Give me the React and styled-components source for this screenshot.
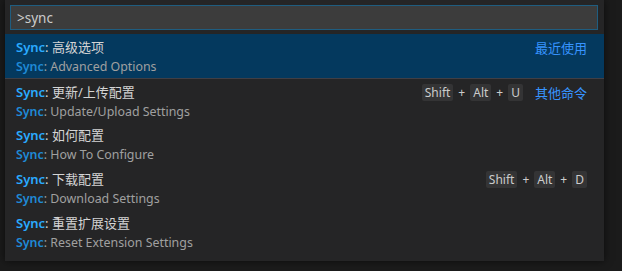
import React from "react";
import styled, { createGlobalStyle } from "styled-components";

const Global = createGlobalStyle`
  html, body { margin: 0; padding: 0; background: #1b1b1b; }
  body { font-family: "Noto Sans", "Noto Sans CJK SC", sans-serif; }
`;

const Page = styled.div`
  width: 622px;
  height: 271px;
  background: #1b1b1b;
  padding-left: 5px;
  box-sizing: border-box;
`;

const Panel = styled.div`
  width: 599px;
  height: 261px;
  background: #252526;
  box-shadow: 0 0 8px rgba(0, 0, 0, 0.6);
  padding-top: 5px;
  box-sizing: border-box;
  display: flex;
  flex-direction: column;
`;

const InputBox = styled.div`
  margin: 0 6px 0 5px;
  height: 25px;
  box-sizing: border-box;
  background: #3c3c3c;
  border: 1px solid #1f5d80;
  display: flex;
  align-items: center;
  padding-left: 6px;
  font-size: 13.5px;
  color: #cccccc;
  font-family: "Noto Sans", sans-serif;
`;

const List = styled.div`
  margin-top: 4px;
  display: flex;
  flex-direction: column;
`;

const Row = styled.div`
  height: 44px;
  box-sizing: border-box;
  padding: 3px 17px 0 11px;
  display: flex;
  align-items: flex-start;
  background: ${(p) => (p.$selected ? "#04395e" : "transparent")};
  border-top: ${(p) => (p.$separator ? "1px solid #3f3f46" : "none")};
`;

const Texts = styled.div`
  flex: 1;
  display: flex;
  flex-direction: column;
`;

const Label = styled.div`
  font-size: 13px;
  line-height: 20px;
  color: #d4d4d4;
  white-space: nowrap;
`;

const Detail = styled.div`
  font-size: 12.4px;
  line-height: 20px;
  color: #a0a0a0;
  white-space: nowrap;
`;

const Hl = styled.span`
  color: ${(p) => (p.$dim ? "#1f8ad6" : "#2aaaff")};
  font-weight: 600;
`;

const Right = styled.div`
  display: flex;
  align-items: center;
  height: 20px;
  gap: 12px;
`;

const Keys = styled.div`
  display: flex;
  align-items: center;
  gap: 5px;
`;

const Kbd = styled.span`
  display: inline-flex;
  align-items: center;
  height: 17px;
  padding: 0 3px;
  background: rgba(128, 128, 128, 0.17);
  border-radius: 2px;
  font-size: 12px;
  color: #cccccc;
`;

const Plus = styled.span`
  font-size: 12px;
  color: #cccccc;
`;

const Group = styled.span`
  font-size: 13px;
  color: #3794ff;
`;

const items = [
  { zh: "高级选项", en: "Advanced Options", group: "最近使用", selected: true },
  { zh: "更新/上传配置", en: "Update/Upload Settings", keys: ["Shift", "Alt", "U"], group: "其他命令", separator: true },
  { zh: "如何配置", en: "How To Configure" },
  { zh: "下载配置", en: "Download Settings", keys: ["Shift", "Alt", "D"] },
  { zh: "重置扩展设置", en: "Reset Extension Settings" },
];

export default function App() {
  return (
    <>
      <Global />
      <Page>
        <Panel>
          <InputBox>&gt;sync</InputBox>
          <List>
            {items.map((it, i) => (
              <Row key={i} $selected={it.selected} $separator={it.separator}>
                <Texts>
                  <Label>
                    <Hl>Sync</Hl>: {it.zh}
                  </Label>
                  <Detail>
                    <Hl $dim>Sync</Hl>: {it.en}
                  </Detail>
                </Texts>
                {(it.keys || it.group) && (
                  <Right>
                    {it.keys && (
                      <Keys>
                        {it.keys.map((k, j) => (
                          <React.Fragment key={k}>
                            {j > 0 && <Plus>+</Plus>}
                            <Kbd>{k}</Kbd>
                          </React.Fragment>
                        ))}
                      </Keys>
                    )}
                    {it.group && <Group>{it.group}</Group>}
                  </Right>
                )}
              </Row>
            ))}
          </List>
        </Panel>
      </Page>
    </>
  );
}
